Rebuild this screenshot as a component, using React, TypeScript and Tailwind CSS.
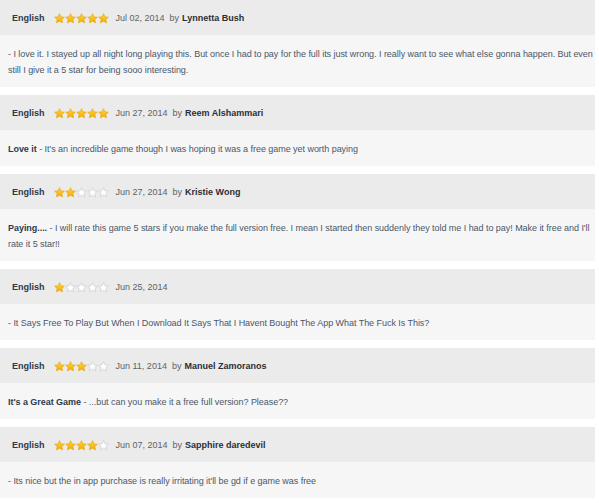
type Review = {
  rating: number
  date: string
  author?: string
  title?: string
  text: string
}

const REVIEWS: Review[] = [
  {
    rating: 5,
    date: 'Jul 02, 2014',
    author: 'Lynnetta Bush',
    text: '- I love it. I stayed up all night long playing this. But once I had to pay for the full its just wrong. I really want to see what else gonna happen. But even still I give it a 5 star for being sooo interesting.',
  },
  {
    rating: 5,
    date: 'Jun 27, 2014',
    author: 'Reem Alshammari',
    title: 'Love it',
    text: "- It's an incredible game though I was hoping it was a free game yet worth paying",
  },
  {
    rating: 2,
    date: 'Jun 27, 2014',
    author: 'Kristie Wong',
    title: 'Paying....',
    text: "- I will rate this game 5 stars if you make the full version free. I mean I started then suddenly they told me I had to pay! Make it free and I'll rate it 5 star!!",
  },
  {
    rating: 1,
    date: 'Jun 25, 2014',
    text: '- It Says Free To Play But When I Download It Says That I Havent Bought The App What The Fuck Is This?',
  },
  {
    rating: 3,
    date: 'Jun 11, 2014',
    author: 'Manuel Zamoranos',
    title: "It's a Great Game",
    text: '- ...but can you make it a free full version? Please??',
  },
  {
    rating: 4,
    date: 'Jun 07, 2014',
    author: 'Sapphire daredevil',
    text: "- Its nice but the in app purchase is really irritating it'll be gd if e game was free",
  },
]

// ── Stars ─────────────────────────────────────────────────────

function Star({ filled }: { filled: boolean }) {
  return (
    <svg width="11" height="11" viewBox="0 0 24 24" className="block">
      <defs>
        <linearGradient id="starGold" x1="0" y1="0" x2="0" y2="1">
          <stop offset="0" stopColor="#ffd84a" />
          <stop offset="1" stopColor="#f2a900" />
        </linearGradient>
      </defs>
      <path
        d="M12 1.5l3.2 6.9 7.3.8-5.4 5 1.5 7.3L12 17.8l-6.6 3.7 1.5-7.3-5.4-5 7.3-.8z"
        fill={filled ? 'url(#starGold)' : '#ffffff'}
        stroke={filled ? '#e8a200' : '#c9c9c9'}
        strokeWidth="1.4"
        strokeLinejoin="round"
      />
    </svg>
  )
}

function Stars({ rating }: { rating: number }) {
  return (
    <div className="flex items-center">
      {[1, 2, 3, 4, 5].map(i => <Star key={i} filled={i <= rating} />)}
    </div>
  )
}

// ── Review card ───────────────────────────────────────────────

function ReviewCard({ r }: { r: Review }) {
  return (
    <div className="mb-[8px] w-[595px]">
      <div className="flex h-[35px] items-center bg-[#ebebeb] pt-[2px] pl-[12px] text-[9px]">
        <span className="font-bold text-[#2c3a4c]">English</span>
        <span className="ml-[9px]"><Stars rating={r.rating} /></span>
        <span className="ml-[7px] text-[#5d6268]">{r.date}</span>
        {r.author && (
          <>
            <span className="ml-[5px] text-[#5d6268]">by</span>
            <span className="ml-[3px] font-bold text-[#2b2f35]">{r.author}</span>
          </>
        )}
      </div>
      <div className="bg-[#f6f6f7] pt-[11px] pb-[9px] pl-[8px] pr-[1px] text-[9px] leading-[16px] tracking-[-0.045px] text-[#4b5667]">
        {r.title && <><span className="font-bold text-[#2c3a4c]">{r.title}</span>{' '}</>}
        {r.text}
      </div>
    </div>
  )
}

export default function App() {
  return (
    <div className="min-h-[503px] bg-white font-['Liberation_Sans',Arial,sans-serif]">
      {REVIEWS.map((r, i) => <ReviewCard key={i} r={r} />)}
    </div>
  )
}
